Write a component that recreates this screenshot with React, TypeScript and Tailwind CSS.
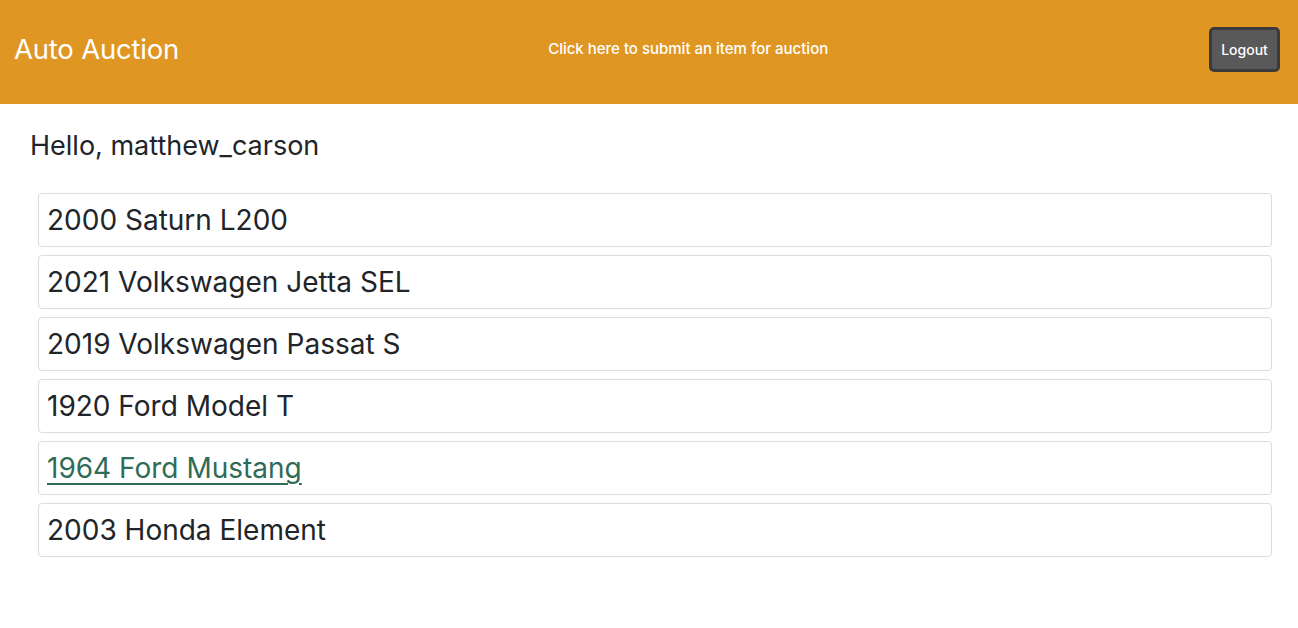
import { FC } from 'react';

const App: FC = () => {
  const cars = [
    { name: '2000 Saturn L200' },
    { name: '2021 Volkswagen Jetta SEL' },
    { name: '2019 Volkswagen Passat S' },
    { name: '1920 Ford Model T' },
    { name: '1964 Ford Mustang', active: true },
    { name: '2003 Honda Element' }
  ];

  return (
    <div className="min-h-screen bg-white font-['Inter',sans-serif] text-[#212529]">
      {/* Header */}
      <header className="h-[104px] bg-[#e09622] flex items-center pl-[14px] pr-[18px] pb-[5px]">
        <h1 className="text-[27.5px] text-white leading-none tracking-[-0.2px]">Auto Auction</h1>
        <a href="#" className="ml-[369px] text-[15px] text-white font-medium">
          Click here to submit an item for auction
        </a>
        <button className="ml-auto h-[45px] w-[71px] rounded-[5px] border-[3px] border-[#3b3b3b] bg-[#595959] text-white text-[14px] font-medium">
          Logout
        </button>
      </header>

      {/* Content */}
      <main className="pt-[26px] pl-[30px] pr-[26px]">
        <p className="text-[27px] leading-8 mb-[31px]">Hello, matthew_carson</p>
        <ul className="ml-2 space-y-2">
          {cars.map((car, i) => (
            <li
              key={i}
              className="h-[54px] flex items-center px-2 border border-[#dcdcdc] rounded-[4px]"
            >
              {car.active ? (
                <a href="#" className="text-[28px] text-[#2f6c57] underline underline-offset-[5px] decoration-[1.5px]">
                  {car.name}
                </a>
              ) : (
                <span className="text-[28px]">{car.name}</span>
              )}
            </li>
          ))}
        </ul>
      </main>
    </div>
  );
};

export default App;
